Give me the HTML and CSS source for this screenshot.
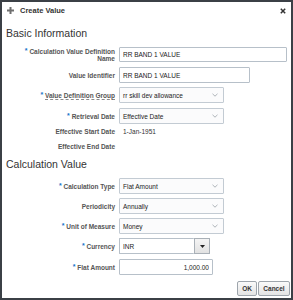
FILE: index.html
```html
<!DOCTYPE html>
<html lang="en">
<head>
  <meta charset="UTF-8">
  <title>Create Value</title>
  <link rel="stylesheet" href="styles.css">
</head>
<body>
  <div class="dialog">
    <!-- Header -->
    <div class="dialog-header">
      <svg class="icon-add" width="7" height="7" viewBox="0 0 7 7"><path d="M2.5 0h2v2.5H7v2H4.5V7h-2V4.5H0v-2h2.5z" fill="#6f6f6f"/></svg>
      <span class="dialog-title">Create Value</span>
      <svg class="icon-close" width="6" height="6" viewBox="0 0 6 6"><path d="M0.8 0.8L5.2 5.2M5.2 0.8L0.8 5.2" stroke="#333" stroke-width="1.5"/></svg>
    </div>

    <h2 class="section-title">Basic Information</h2>

    <div class="form-row row-name">
      <label class="field-label"><span class="req">*</span> Calculation Value Definition<br>Name</label>
      <input class="text-input w-name" type="text" value="RR BAND 1 VALUE">
    </div>
    <div class="form-row row-ident">
      <label class="field-label">Value Identifier</label>
      <input class="text-input w-ident" type="text" value="RR BAND 1 VALUE">
    </div>
    <div class="form-row row-group">
      <label class="field-label"><span class="req">*</span> <span class="help">Value Definition Group</span></label>
      <div class="select"><span>rr skill dev allowance</span><svg width="6" height="4" viewBox="0 0 6 4"><path d="M0.5 0.8L3 3.2L5.5 0.8" fill="none" stroke="#a6acb2" stroke-width="0.9"/></svg></div>
    </div>
    <div class="form-row row-std">
      <label class="field-label"><span class="req">*</span> Retrieval Date</label>
      <div class="select"><span>Effective Date</span><svg width="6" height="4" viewBox="0 0 6 4"><path d="M0.5 0.8L3 3.2L5.5 0.8" fill="none" stroke="#a6acb2" stroke-width="0.9"/></svg></div>
    </div>
    <div class="form-row static-row">
      <label class="field-label">Effective Start Date</label>
      <span class="static-value">1-Jan-1951</span>
    </div>
    <div class="form-row static-row row-end">
      <label class="field-label">Effective End Date</label>
      <span class="static-value"></span>
    </div>

    <h2 class="section-title section-calc">Calculation Value</h2>

    <div class="form-row row-first">
      <label class="field-label"><span class="req">*</span> Calculation Type</label>
      <div class="select"><span>Flat Amount</span><svg width="6" height="4" viewBox="0 0 6 4"><path d="M0.5 0.8L3 3.2L5.5 0.8" fill="none" stroke="#a6acb2" stroke-width="0.9"/></svg></div>
    </div>
    <div class="form-row row-next">
      <label class="field-label">Periodicity</label>
      <div class="select"><span>Annually</span><svg width="6" height="4" viewBox="0 0 6 4"><path d="M0.5 0.8L3 3.2L5.5 0.8" fill="none" stroke="#a6acb2" stroke-width="0.9"/></svg></div>
    </div>
    <div class="form-row row-next">
      <label class="field-label"><span class="req">*</span> Unit of Measure</label>
      <div class="select"><span>Money</span><svg width="6" height="4" viewBox="0 0 6 4"><path d="M0.5 0.8L3 3.2L5.5 0.8" fill="none" stroke="#a6acb2" stroke-width="0.9"/></svg></div>
    </div>
    <div class="form-row row-next">
      <label class="field-label"><span class="req">*</span> Currency</label>
      <div class="combo">
        <input class="text-input combo-input" type="text" value="INR">
        <span class="combo-btn"><svg width="5" height="3" viewBox="0 0 5 3"><path d="M0 0h5L2.5 3z" fill="#222"/></svg></span>
      </div>
    </div>
    <div class="form-row row-std">
      <label class="field-label"><span class="req">*</span> Flat Amount</label>
      <input class="text-input w-amount" type="text" value="1,000.00">
    </div>

    <!-- Footer -->
    <div class="dialog-footer">
      <button class="btn btn-ok">OK</button>
      <button class="btn btn-cancel">Cancel</button>
    </div>
  </div>
</body>
</html>
```

FILE: styles.css
```css
/* Page */
body {
  margin: 0;
  padding: 0;
  font-family: "Liberation Sans", Arial, sans-serif;
  background: #ffffff;
}

/* Dialog frame */
.dialog {
  width: 293px;
  height: 300px;
  box-sizing: border-box;
  border: 2px solid #3b4046;
  background: #ffffff;
  display: flex;
  flex-direction: column;
}

.dialog-header {
  height: 17px;
  display: flex;
  align-items: center;
  padding: 0 5px 0 5px;
}

.icon-add {
  flex: none;
}

.dialog-title {
  margin-left: 6px;
  font-size: 7.5px;
  font-weight: bold;
  color: #333333;
  flex: 1;
}

.icon-close {
  flex: none;
}

/* Section headings */
.section-title {
  margin: 7px 0 0;
  padding-left: 4px;
  font-size: 10.5px;
  line-height: 14px;
  font-weight: normal;
  color: #333333;
}

.section-calc {
  margin-top: 4px;
}

/* Form rows */
.form-row {
  display: flex;
  align-items: center;
  gap: 4px;
  height: 16px;
  margin-top: 4px;
}

.row-name {
  margin-top: 7px;
  height: 15px;
}

.row-ident,
.row-std {
  margin-top: 5px;
}

.row-first {
  margin-top: 7px;
}

.static-row {
  height: 14px;
  margin-top: 0;
}

.row-end {
  margin-top: 1px;
}

.field-label {
  flex: none;
  width: 113px;
  text-align: right;
  font-size: 6.5px;
  line-height: 7px;
  font-weight: bold;
  color: #555555;
}

.req {
  color: #1a73c9;
  font-size: 7px;
  position: relative;
  top: -1px;
}

.help {
  border-bottom: 1px dashed #8a8a8a;
}

/* Inputs */
.text-input {
  box-sizing: border-box;
  height: 100%;
  margin: 0;
  padding: 0 3px;
  border: 1px solid #b7c0c9;
  border-radius: 1px;
  background: #ffffff;
  font-family: inherit;
  font-size: 6.5px;
  color: #222222;
  outline: none;
}

.w-name {
  width: 168px;
}

.w-ident {
  width: 131px;
}

.w-amount {
  width: 94px;
  text-align: right;
}

.select {
  box-sizing: border-box;
  width: 105px;
  height: 100%;
  display: flex;
  align-items: center;
  justify-content: space-between;
  padding: 0 5px 0 3px;
  border: 1px solid #c3cbd3;
  border-radius: 1px;
  background: #fbfbfc;
  font-size: 6.5px;
  color: #222222;
}

.combo {
  display: flex;
  height: 100%;
  width: 91px;
}

.combo-input {
  flex: 1;
  min-width: 0;
  border-right: none;
}

.combo-btn {
  box-sizing: border-box;
  width: 16px;
  display: flex;
  align-items: center;
  justify-content: center;
  border: 1px solid #a9b0b7;
  background: linear-gradient(#f4f4f4, #e2e2e2);
}

.static-value {
  padding-left: 4px;
  font-size: 6.5px;
  color: #333333;
}

/* Footer */
.dialog-footer {
  display: flex;
  justify-content: flex-end;
  gap: 1px;
  margin-top: 6px;
  padding-right: 1px;
}

.btn {
  height: 15px;
  padding: 0;
  border: 1px solid #9ea5ac;
  border-radius: 2px;
  background: linear-gradient(#fafafa, #e4e4e4);
  font-family: inherit;
  font-size: 6.5px;
  font-weight: bold;
  color: #333333;
  cursor: pointer;
}

.btn-ok {
  width: 20px;
}

.btn-cancel {
  width: 32px;
}
```
